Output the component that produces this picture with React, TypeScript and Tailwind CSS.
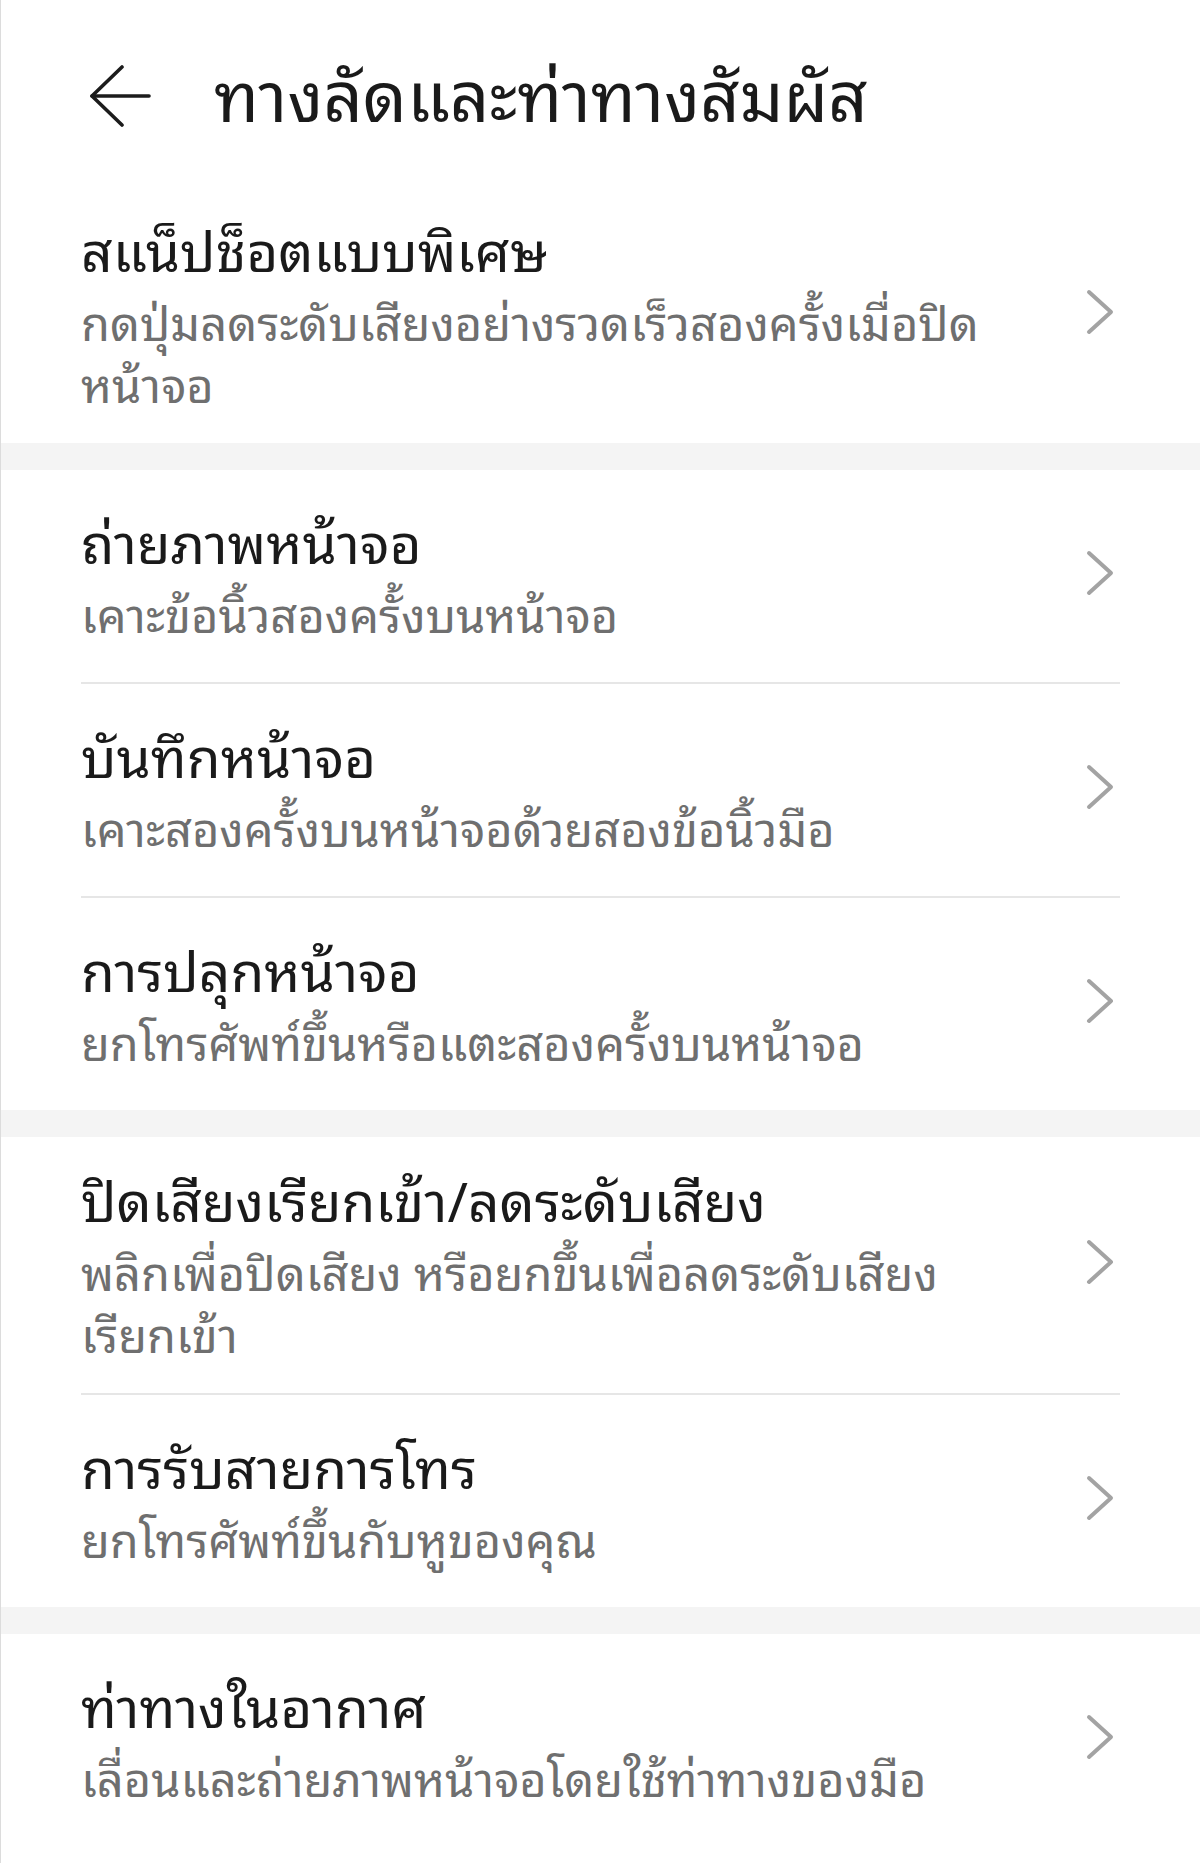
import React from 'react'

type Item = {
  title: string
  lines: string[]
}

const sections: Item[][] = [
  [
    {
      title: 'สแน็ปช็อตแบบพิเศษ',
      lines: ['กดปุ่มลดระดับเสียงอย่างรวดเร็วสองครั้งเมื่อปิด', 'หน้าจอ'],
    },
  ],
  [
    { title: 'ถ่ายภาพหน้าจอ', lines: ['เคาะข้อนิ้วสองครั้งบนหน้าจอ'] },
    { title: 'บันทึกหน้าจอ', lines: ['เคาะสองครั้งบนหน้าจอด้วยสองข้อนิ้วมือ'] },
    { title: 'การปลุกหน้าจอ', lines: ['ยกโทรศัพท์ขึ้นหรือแตะสองครั้งบนหน้าจอ'] },
  ],
  [
    {
      title: 'ปิดเสียงเรียกเข้า/ลดระดับเสียง',
      lines: ['พลิกเพื่อปิดเสียง หรือยกขึ้นเพื่อลดระดับเสียง', 'เรียกเข้า'],
    },
    { title: 'การรับสายการโทร', lines: ['ยกโทรศัพท์ขึ้นกับหูของคุณ'] },
  ],
  [{ title: 'ท่าทางในอากาศ', lines: ['เลื่อนและถ่ายภาพหน้าจอโดยใช้ท่าทางของมือ'] }],
]

const BackArrow = () => (
  <svg width="62" height="62" viewBox="0 0 62 62" fill="none" stroke="#1c1c1c" strokeWidth="3.6" strokeLinecap="round" strokeLinejoin="round">
    <path d="M3 31 H60" />
    <path d="M33 2 L3 31 L33 60" />
  </svg>
)

const Chevron = () => (
  <svg width="28" height="46" viewBox="0 0 28 46" fill="none" stroke="#a3a3a3" strokeWidth="4" strokeLinecap="round" strokeLinejoin="round">
    <path d="M3 3 L25 23 L3 43" />
  </svg>
)

const Row = ({ item }: { item: Item }) => (
  <div className="flex items-center min-h-[212px] pt-[24px] pb-[30px]">
    <div className="flex-1 min-w-0">
      <div className="text-[55px] leading-[72px] text-[#1a1a1a] whitespace-nowrap">{item.title}</div>
      <p className="mt-[6px] text-[47px] leading-[62px] text-[#6f6f6f] whitespace-nowrap">
        {item.lines.map((l, i) => (
          <React.Fragment key={i}>
            {i > 0 && <br />}
            {l}
          </React.Fragment>
        ))}
      </p>
    </div>
    <div className="ml-4 mr-[6px]">
      <Chevron />
    </div>
  </div>
)

export default function App() {
  return (
    <div
      className="w-[1200px] min-h-[1863px] bg-white border-l border-[#dcdcdc] overflow-hidden"
      style={{ fontFamily: '"Noto Sans Thai Looped", "Noto Sans Thai", "Noto Sans Thai UI", "Noto Sans", "DejaVu Sans", sans-serif' }}
    >
      <div className="h-[187px] flex items-center pl-[88px] pt-[4px]">
        <BackArrow />
        <h1 className="ml-[63px] -mt-[8px] text-[69px] leading-none text-[#1a1a1a] font-normal">ทางลัดและท่าทางสัมผัส</h1>
      </div>

      {sections.map((sec, si) => (
        <div key={si}>
          {si > 0 && <div className="h-[27px] bg-[#f4f4f4]" />}
          <div className="px-[80px]">
            {sec.map((item, ii) => (
              <div key={ii} className={ii < sec.length - 1 ? 'border-b-2 border-[#e6e6e6]' : ''}>
                <Row item={item} />
              </div>
            ))}
          </div>
        </div>
      ))}
    </div>
  )
}
